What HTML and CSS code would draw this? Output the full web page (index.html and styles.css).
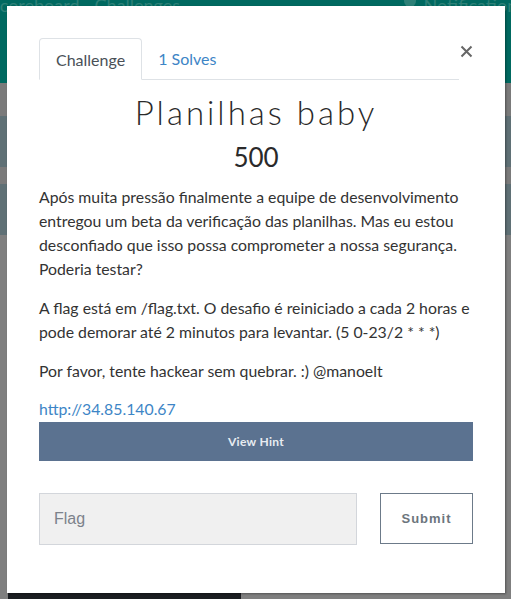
FILE: index.html
```html
<!DOCTYPE html>
<html>
<head>
<meta charset="utf-8">
<link rel="stylesheet" href="styles.css">
</head>
<body>
<div class="page">
  <nav class="navbar">
    <span class="nav-item nav-score">Scoreboard</span>
    <span class="nav-item">Challenges</span>
    <span class="nav-spacer"></span>
    <span class="nav-item nav-notif"><span class="bell"></span>Notifications</span>
  </nav>
  <div class="gap-a"></div>
  <div class="band"></div>
  <div class="gap-b"></div>
  <div class="band"></div>
  <div class="rest"></div>
  <div class="footer-strip"></div>
</div>

<div class="modal">
  <div class="modal-head">
    <div class="tabs">
      <div class="tab active">Challenge</div>
      <div class="tab link">1 Solves</div>
    </div>
    <button class="close" aria-label="Close">
      <svg width="13" height="13" viewBox="0 0 13 13"><path d="M1.5 1.5 L11.5 11.5 M11.5 1.5 L1.5 11.5" stroke="#666" stroke-width="2" stroke-linecap="butt"/></svg>
    </button>
  </div>
  <h2 class="title">Planilhas baby</h2>
  <h3 class="value">500</h3>
  <div class="desc">
    <p>Após muita pressão finalmente a equipe de desenvolvimento entregou um beta da verificação das planilhas. Mas eu estou desconfiado que isso possa comprometer a nossa segurança. Poderia testar?</p>
    <p>A flag está em /flag.txt. O desafio é reiniciado a cada 2 horas e pode demorar até 2 minutos para levantar. (5 0-23/2 * * *)</p>
    <p>Por favor, tente hackear sem quebrar. :) @manoelt</p>
    <p class="url"><a href="#">http://34.85.140.67</a></p>
  </div>
  <button class="hint">View Hint</button>
  <div class="submit-row">
    <input class="flag" type="text" placeholder="Flag">
    <button class="submit">Submit</button>
  </div>
</div>
</body>
</html>
```

FILE: styles.css
```css
html, body {
  margin: 0;
  padding: 0;
  height: 100%;
  overflow: hidden;
}
body {
  background: #7f7f7f;
  font-family: Lato, "Open Sans", sans-serif;
}
.page {
  display: flex;
  flex-direction: column;
  height: 599px;
}
.navbar {
  height: 83px;
  background: #006960;
  display: flex;
  align-items: flex-start;
  gap: 15px;
  color: #2d8077;
  font-family: Lato, sans-serif;
  font-size: 18px;
  line-height: 10px;
  overflow: hidden;
}
.nav-score { margin-left: -10px; }
.nav-spacer { flex: 1; }
.nav-item { white-space: nowrap; }
.nav-notif { display: flex; align-items: flex-start; gap: 8px; margin-right: -14px; }
.bell {
  display: inline-block;
  width: 12px;
  height: 9px;
  background: #2d8077;
  border-radius: 0 0 6px 6px;
  margin-top: -2px;
}
.gap-a { height: 33px; background: #7a7a7a; }
.band { height: 51px; background: #5f7075; }
.gap-b { height: 17px; background: #7a7a7a; }
.rest { flex: 1; background: #7f7f7f; }
.footer-strip {
  height: 6px;
  width: 233px;
  margin-left: 8px;
  background: #1a1d21;
}

.modal {
  position: absolute;
  left: 7px;
  top: 6px;
  width: 498px;
  height: 587px;
  box-sizing: border-box;
  background: #fff;
  box-shadow: 1px 1px 2px rgba(0,0,0,0.35);
  padding: 32px 32px 0 32px;
  display: flex;
  flex-direction: column;
}
.modal-head {
  display: flex;
  align-items: flex-start;
}
.tabs {
  display: flex;
  width: 420px;
  flex-shrink: 0;
  border-bottom: 1px solid #dee2e6;
  height: 41px;
}
.tab {
  font-size: 16px;
  height: 41px;
  box-sizing: border-box;
  padding: 0 16px;
  display: flex;
  align-items: center;
  margin-bottom: -1px;
}
.tab.active {
  color: #495057;
  border: 1px solid #dee2e6;
  border-bottom-color: #fff;
  border-radius: 4px 4px 0 0;
  height: 42px;
  background: #fff;
}
.tab.link {
  color: #3d85c6;
}
.close {
  border: 0;
  background: none;
  padding: 0;
  margin: 7px 0 0 1px;
  width: 13px;
  height: 13px;
  display: flex;
}
.title {
  margin: 10px 0 0 0;
  text-align: center;
  font-family: Lato, sans-serif;
  font-weight: 300;
  font-size: 33px;
  letter-spacing: 3px;
  line-height: 44px;
  color: #2a2a2a;
}
.value {
  margin: 6px 0 0 0;
  text-align: center;
  font-weight: 400;
  font-size: 26px;
  line-height: 34px;
  color: #2a2a2a;
}
.desc {
  margin-top: 11px;
  font-size: 15.8px;
  line-height: 24px;
  color: #333;
}
.desc p { margin: 0 0 15px 0; }
.desc p.url { margin: 0; line-height: 22px; }
.desc a { color: #3d85c6; text-decoration: none; }
.hint {
  margin-top: 2px;
  height: 39px;
  border: 0;
  background: #5b7290;
  color: #e8ecf1;
  font-family: Lato, sans-serif;
  font-weight: 700;
  font-size: 12px;
  letter-spacing: 0.3px;
}
.submit-row {
  margin-top: 32px;
  display: flex;
  justify-content: space-between;
  align-items: flex-start;
}
.flag {
  width: 318px;
  height: 52px;
  box-sizing: border-box;
  background: #f0f0f0;
  border: 1px solid #d3d6db;
  padding: 0 14px;
  font-family: "Liberation Sans", Arial, sans-serif;
  font-size: 16px;
  color: #333;
  outline: none;
}
.flag::placeholder { color: #7c828b; }
.submit {
  width: 93px;
  height: 51px;
  box-sizing: border-box;
  background: #fff;
  border: 1px solid #6c7a89;
  color: #6c757d;
  font-family: "Liberation Sans", Arial, sans-serif;
  font-weight: 700;
  font-size: 13px;
  letter-spacing: 1px;
}
```
